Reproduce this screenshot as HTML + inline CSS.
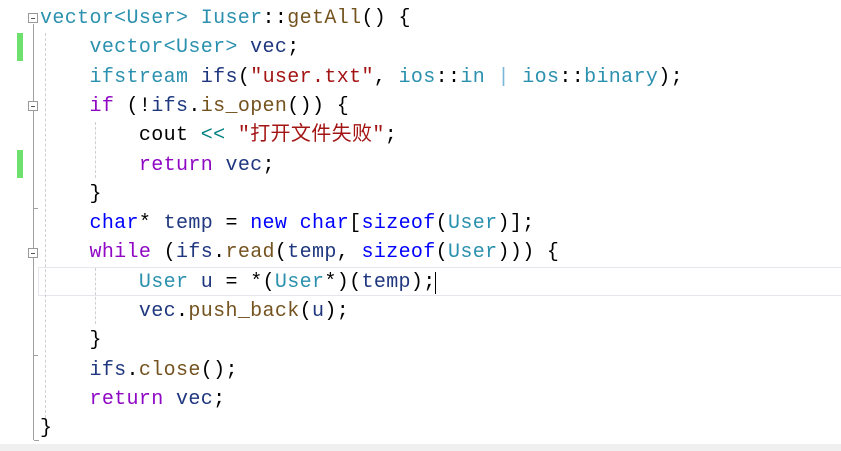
<!DOCTYPE html>
<html><head><meta charset="utf-8"><style>
body{margin:0;width:841px;height:451px;overflow:hidden;background:#fff;position:relative;font-family:"Liberation Mono","Noto Sans CJK SC",monospace;}
.l{position:absolute;left:40px;height:29.3px;line-height:29.3px;font-size:20px;letter-spacing:0.36px;white-space:pre;color:#000}
.t{color:#2b91af}.f{color:#74531f}.k{color:#8f08c4}.b{color:#0000ff}.s{color:#a31515}.v{color:#1f377f}.o{color:#008080}.p{color:#7bb7d9}
.cur{position:absolute;left:38px;top:267px;width:810px;height:29px;border:1.5px solid #e6e6ec;border-right:none;box-sizing:border-box}
.g{position:absolute;left:17px;width:6px;background:#6ee06e}
.fold{position:absolute;left:28px;width:10px;height:10px;border:1px solid #999;background:#fff;box-sizing:border-box}
.fold:after{content:"";position:absolute;left:2px;top:4px;width:4px;height:1px;background:#555}
.vl{position:absolute;left:33px;width:1px;background:#a0a0a0}
.dg{position:absolute;width:0;border-left:1px dashed #d0d0d0}
</style></head><body>
<div class="cur"></div>
<div class="vl" style="top:24px;height:416px"></div>
<div class="fold" style="top:13px"></div>
<div class="fold" style="top:101px"></div>
<div class="fold" style="top:248px"></div>
<div class="g" style="top:33px;height:28px"></div>
<div class="g" style="top:150px;height:28px"></div>
<div class="dg" style="left:45px;top:33px;height:385px"></div>
<div class="dg" style="left:95px;top:122px;height:56px"></div>
<div class="dg" style="left:95px;top:268px;height:56px"></div>
<div style="position:absolute;left:34px;top:208px;width:4px;height:1px;background:#a0a0a0"></div>
<div style="position:absolute;left:34px;top:355px;width:4px;height:1px;background:#a0a0a0"></div>
<div style="position:absolute;left:34px;top:440px;width:5px;height:1px;background:#a0a0a0"></div>
<div style="position:absolute;left:435px;top:272px;width:1px;height:22px;background:#000"></div>
<div style="position:absolute;left:0;top:444px;width:841px;height:7px;background:#f0f0f0"></div>

<div class="l" style="top:4px"><span class="t">vector&lt;User&gt;</span> <span class="t">Iuser</span>::<span class="f">getAll</span>() {</div>
<div class="l" style="top:33.3px">    <span class="t">vector&lt;User&gt;</span> <span class="v">vec</span>;</div>
<div class="l" style="top:62.6px">    <span class="t">ifstream</span> <span class="v">ifs</span>(<span class="s">"user.txt"</span>, <span class="t">ios</span>::<span class="t">in</span> <span class="p">|</span> <span class="t">ios</span>::<span class="t">binary</span>);</div>
<div class="l" style="top:91.9px">    <span class="k">if</span> (!<span class="v">ifs</span>.<span class="f">is_open</span>()) {</div>
<div class="l" style="top:121.2px">        cout <span class="o">&lt;&lt;</span> <span class="s">"打开文件失败"</span>;</div>
<div class="l" style="top:150.5px">        <span class="k">return</span> <span class="v">vec</span>;</div>
<div class="l" style="top:179.8px">    }</div>
<div class="l" style="top:209.1px">    <span class="b">char</span>* <span class="v">temp</span> = <span class="b">new</span> <span class="b">char</span>[<span class="b">sizeof</span>(<span class="t">User</span>)];</div>
<div class="l" style="top:238.4px">    <span class="k">while</span> (<span class="v">ifs</span>.<span class="f">read</span>(<span class="v">temp</span>, <span class="b">sizeof</span>(<span class="t">User</span>))) {</div>
<div class="l" style="top:267.7px">        <span class="t">User</span> <span class="v">u</span> = *(<span class="t">User</span>*)(<span class="v">temp</span>);</div>
<div class="l" style="top:297px">        <span class="v">vec</span>.<span class="f">push_back</span>(<span class="v">u</span>);</div>
<div class="l" style="top:326.3px">    }</div>
<div class="l" style="top:355.6px">    <span class="v">ifs</span>.<span class="f">close</span>();</div>
<div class="l" style="top:384.9px">    <span class="k">return</span> <span class="v">vec</span>;</div>
<div class="l" style="top:414.2px">}</div>
</body></html>
